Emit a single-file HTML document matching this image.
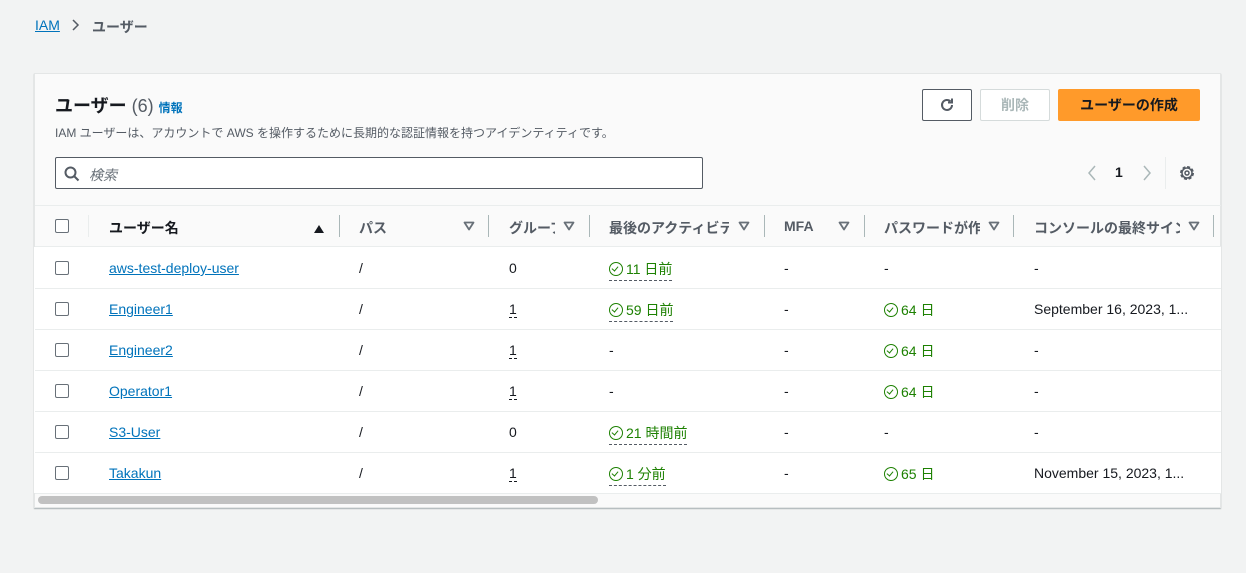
<!DOCTYPE html>
<html><head><meta charset="utf-8"><style>
*{box-sizing:border-box;margin:0;padding:0}
body{width:1246px;height:573px;background:#f2f3f3;font-family:"Liberation Sans","Noto Sans CJK JP",sans-serif;color:#16191f;position:relative;overflow:hidden;font-size:14px}
.a{position:absolute;white-space:nowrap}
.link{color:#0073bb;text-decoration:underline}
.panel{position:absolute;left:34px;top:73px;width:1187px;height:435px;background:#fafafa;border:1px solid #e4e6e6;box-shadow:0 1px 1px rgba(0,28,36,.3)}
.rows{position:absolute;left:34px;top:247px;width:1187px;height:246px;background:#fff}
.hl{position:absolute;left:35px;width:1186px;height:1px;background:#eaeded}
.cb{position:absolute;left:55px;width:14px;height:14px;border:1px solid #687078;border-radius:2px;background:#fff}
.sep{position:absolute;width:1px;height:22px;background:#aab7b8;top:215px}
.th{font-weight:bold;color:#545b64;font-size:14px;overflow:hidden}
.tri{position:absolute;top:221px}
.g{color:#1d8102;border-bottom:1px dashed #545b64;padding-bottom:1px}
.u{border-bottom:1px dashed #16191f}
.ck{display:inline-block;width:14px;height:14px;border:1.8px solid #1d8102;border-radius:50%;vertical-align:-2px;margin-right:3px;position:relative}
.ck:after{content:"";position:absolute;left:3px;top:1.5px;width:3px;height:5px;border:solid #1d8102;border-width:0 1.6px 1.6px 0;transform:rotate(40deg)}
</style></head><body>
<div class="a" style="left:35px;top:17px;font-size:14px"><span class="link">IAM</span></div>
<div class="a" style="left:70px;top:18px"><svg width="12" height="14"><path d="M3 2l5 5-5 5" fill="none" stroke="#545b64" stroke-width="1.5"/></svg></div>
<div class="a" style="left:92px;top:17px;color:#545b64;font-weight:bold">ユーザー</div>
<div class="panel"></div>
<div class="rows"></div>
<div class="a" style="left:55px;top:92px;font-size:18px;font-weight:bold">ユーザー <span style="font-weight:normal;color:#545b64">(6)</span> <span style="font-size:12px;color:#0073bb;font-weight:bold">情報</span></div>
<div class="a" style="left:55px;top:124px;font-size:12px;color:#545b64">IAM ユーザーは、アカウントで AWS を操作するために長期的な認証情報を持つアイデンティティです。</div>
<div class="a" style="left:922px;top:89px;width:50px;height:32px;border:1px solid #545b64;border-radius:2px;background:#fff"><svg style="position:absolute;left:15px;top:6px" width="18" height="18" viewBox="0 0 18 18"><path d="M14 9a5 5 0 1 1-1.5-3.6" fill="none" stroke="#545b64" stroke-width="2"/><path d="M14 2.5v4h-4" fill="none" stroke="#545b64" stroke-width="2"/></svg></div>
<div class="a" style="left:980px;top:89px;width:70px;height:32px;border:1px solid #d5dbdb;border-radius:2px;background:#fff;color:#aab7b8;font-weight:bold;text-align:center;line-height:30px">削除</div>
<div class="a" style="left:1058px;top:89px;width:142px;height:32px;border-radius:2px;background:#ff9a2a;color:#16191f;font-weight:bold;text-align:center;line-height:32px">ユーザーの作成</div>
<div class="a" style="left:55px;top:157px;width:648px;height:32px;border:1px solid #545b64;border-radius:2px;background:#fff"><svg style="position:absolute;left:8px;top:8px" width="16" height="16"><circle cx="6.5" cy="6.5" r="5" fill="none" stroke="#545b64" stroke-width="2"/><path d="M10 10l4.5 4.5" stroke="#545b64" stroke-width="2"/></svg><span style="position:absolute;left:33px;top:7px;color:#687078;font-style:italic">検索</span></div>
<div class="a" style="left:1086px;top:164px"><svg width="12" height="18"><path d="M9 2l-6 7 6 7" fill="none" stroke="#aab7b8" stroke-width="1.5"/></svg></div>
<div class="a" style="left:1115px;top:164px;font-weight:bold">1</div>
<div class="a" style="left:1141px;top:164px"><svg width="12" height="18"><path d="M3 2l6 7-6 7" fill="none" stroke="#aab7b8" stroke-width="1.5"/></svg></div>
<div class="a" style="left:1165px;top:157px;width:1px;height:32px;background:#eaeded"></div>
<div class="a" style="left:1178px;top:164px"><svg width="18" height="18" viewBox="0 0 18 18"><circle cx="9" cy="9" r="6" fill="none" stroke="#545b64" stroke-width="2" stroke-dasharray="3 1.7"/><circle cx="9" cy="9" r="5" fill="none" stroke="#545b64" stroke-width="1.5"/><circle cx="9" cy="9" r="2" fill="none" stroke="#545b64" stroke-width="1.5"/></svg></div>
<div class="hl" style="top:205px"></div>
<div class="cb" style="top:219px"></div>
<div class="a" style="left:88px;top:215px;width:1px;height:22px;background:#eaeded"></div>
<div class="a th" style="left:109px;top:218px;color:#16191f">ユーザー名</div>
<div class="a" style="left:313px;top:221px"><svg width="12" height="10"><path d="M1 9h10L6 1z" fill="#16191f"/></svg></div>
<div class="sep" style="left:339px"></div>
<div class="a th" style="left:359px;top:218px">パス</div><svg class="tri" style="left:463px" width="12" height="10"><path d="M1.5 1.5h9L6 8.5z" fill="none" stroke="#687078" stroke-width="1.8" stroke-linejoin="round"/></svg>
<div class="sep" style="left:488px"></div>
<div class="a th" style="left:509px;top:218px;width:46px">グループ</div><svg class="tri" style="left:563px" width="12" height="10"><path d="M1.5 1.5h9L6 8.5z" fill="none" stroke="#687078" stroke-width="1.8" stroke-linejoin="round"/></svg>
<div class="sep" style="left:589px"></div>
<div class="a th" style="left:609px;top:218px;width:120px">最後のアクティビティ</div><svg class="tri" style="left:738px" width="12" height="10"><path d="M1.5 1.5h9L6 8.5z" fill="none" stroke="#687078" stroke-width="1.8" stroke-linejoin="round"/></svg>
<div class="sep" style="left:764px"></div>
<div class="a th" style="left:784px;top:218px">MFA</div><svg class="tri" style="left:838px" width="12" height="10"><path d="M1.5 1.5h9L6 8.5z" fill="none" stroke="#687078" stroke-width="1.8" stroke-linejoin="round"/></svg>
<div class="sep" style="left:864px"></div>
<div class="a th" style="left:884px;top:218px;width:96px">パスワードが作成</div><svg class="tri" style="left:988px" width="12" height="10"><path d="M1.5 1.5h9L6 8.5z" fill="none" stroke="#687078" stroke-width="1.8" stroke-linejoin="round"/></svg>
<div class="sep" style="left:1013px"></div>
<div class="a th" style="left:1034px;top:218px;width:146px">コンソールの最終サインイン</div><svg class="tri" style="left:1188px" width="12" height="10"><path d="M1.5 1.5h9L6 8.5z" fill="none" stroke="#687078" stroke-width="1.8" stroke-linejoin="round"/></svg>
<div class="sep" style="left:1213px"></div>
<div class="hl" style="top:246px"></div>
<div class="hl" style="top:288px"></div><div class="hl" style="top:329px"></div><div class="hl" style="top:370px"></div><div class="hl" style="top:411px"></div><div class="hl" style="top:452px"></div><div class="hl" style="top:493px"></div>

<div class="cb" style="top:261px"></div><div class="a link" style="left:109px;top:260px">aws-test-deploy-user</div><div class="a" style="left:359px;top:260px">/</div><div class="a" style="left:509px;top:260px">0</div><div class="a g" style="left:609px;top:259px"><span class="ck"></span>11 日前</div><div class="a" style="left:784px;top:260px">-</div><div class="a" style="left:884px;top:260px">-</div><div class="a" style="left:1034px;top:260px">-</div>

<div class="cb" style="top:302px"></div><div class="a link" style="left:109px;top:301px">Engineer1</div><div class="a" style="left:359px;top:301px">/</div><div class="a u" style="left:509px;top:301px">1</div><div class="a g" style="left:609px;top:300px"><span class="ck"></span>59 日前</div><div class="a" style="left:784px;top:301px">-</div><div class="a" style="left:884px;top:300px;color:#1d8102"><span class="ck"></span>64 日</div><div class="a" style="left:1034px;top:301px">September 16, 2023, 1...</div>

<div class="cb" style="top:343px"></div><div class="a link" style="left:109px;top:342px">Engineer2</div><div class="a" style="left:359px;top:342px">/</div><div class="a u" style="left:509px;top:342px">1</div><div class="a" style="left:609px;top:342px">-</div><div class="a" style="left:784px;top:342px">-</div><div class="a" style="left:884px;top:341px;color:#1d8102"><span class="ck"></span>64 日</div><div class="a" style="left:1034px;top:342px">-</div>

<div class="cb" style="top:384px"></div><div class="a link" style="left:109px;top:383px">Operator1</div><div class="a" style="left:359px;top:383px">/</div><div class="a u" style="left:509px;top:383px">1</div><div class="a" style="left:609px;top:383px">-</div><div class="a" style="left:784px;top:383px">-</div><div class="a" style="left:884px;top:382px;color:#1d8102"><span class="ck"></span>64 日</div><div class="a" style="left:1034px;top:383px">-</div>

<div class="cb" style="top:425px"></div><div class="a link" style="left:109px;top:424px">S3-User</div><div class="a" style="left:359px;top:424px">/</div><div class="a" style="left:509px;top:424px">0</div><div class="a g" style="left:609px;top:423px"><span class="ck"></span>21 時間前</div><div class="a" style="left:784px;top:424px">-</div><div class="a" style="left:884px;top:424px">-</div><div class="a" style="left:1034px;top:424px">-</div>

<div class="cb" style="top:466px"></div><div class="a link" style="left:109px;top:465px">Takakun</div><div class="a" style="left:359px;top:465px">/</div><div class="a u" style="left:509px;top:465px">1</div><div class="a g" style="left:609px;top:464px"><span class="ck"></span>1 分前</div><div class="a" style="left:784px;top:465px">-</div><div class="a" style="left:884px;top:464px;color:#1d8102"><span class="ck"></span>65 日</div><div class="a" style="left:1034px;top:465px">November 15, 2023, 1...</div>

<div class="a" style="left:38px;top:496px;width:560px;height:8px;border-radius:4px;background:#c1c1c1"></div>
</body></html>
